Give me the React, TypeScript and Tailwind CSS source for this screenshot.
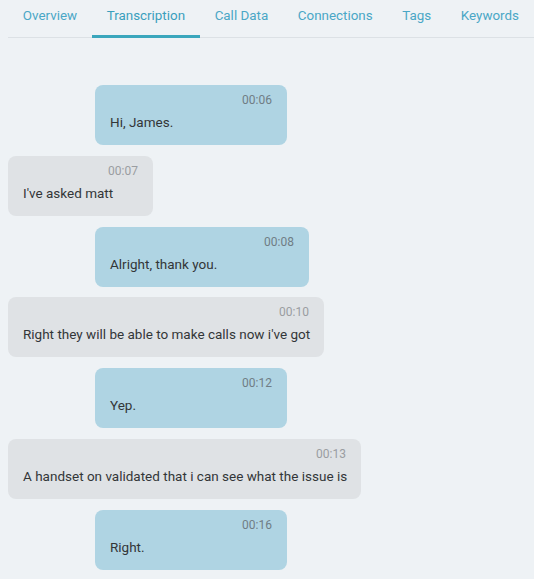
import React from 'react'

const tabs = ['Overview', 'Transcription', 'Call Data', 'Connections', 'Tags', 'Keywords']

interface Line {
  time: string
  text: string
  agent: boolean
  width: string
}

const lines: Line[] = [
  { time: '00:06', text: 'Hi, James.', agent: true, width: 'w-[192px]' },
  { time: '00:07', text: "I've asked matt", agent: false, width: 'w-[145px]' },
  { time: '00:08', text: 'Alright, thank you.', agent: true, width: 'w-[214px]' },
  { time: '00:10', text: "Right they will be able to make calls now i've got", agent: false, width: 'w-[316px]' },
  { time: '00:12', text: 'Yep.', agent: true, width: 'w-[192px]' },
  { time: '00:13', text: 'A handset on validated that i can see what the issue is', agent: false, width: 'w-[353px]' },
  { time: '00:16', text: 'Right.', agent: true, width: 'w-[192px]' },
]

export default function App() {
  return (
    <div className="min-h-[579px] bg-[#eef2f5] pl-2 font-['Roboto',sans-serif]">
      <div className="flex border-b border-[#dce1e5] h-[38px]">
        {tabs.map(t => (
          <div
            key={t}
            className={
              t === 'Transcription'
                ? 'px-[14.8px] pt-[7px] text-[13.4px] leading-[18px] whitespace-nowrap text-[#3a9fbd] border-b-[3px] border-[#3aa6bc] h-[38px]'
                : 'px-[14.8px] pt-[7px] text-[13.4px] leading-[18px] whitespace-nowrap text-[#4aa7c6] h-[38px]'
            }
          >
            {t}
          </div>
        ))}
      </div>

      <div className="flex flex-col gap-[10.83px] pt-[47px]">
        {lines.map((l, i) => (
          <div
            key={i}
            className={`${l.width} h-[60px] rounded-lg px-[15px] pt-[7px] ${l.agent ? 'ml-[87px] bg-[#afd4e3]' : 'bg-[#dfe2e5]'}`}
          >
            <div className={`text-right text-[12px] leading-[16px] ${l.agent ? 'text-[#6f7d85]' : 'text-[#9a9da1]'}`}>{l.time}</div>
            <div className="mt-[4px] text-[13.5px] leading-[20px] text-[#333638] whitespace-nowrap">{l.text}</div>
          </div>
        ))}
      </div>
    </div>
  )
}
